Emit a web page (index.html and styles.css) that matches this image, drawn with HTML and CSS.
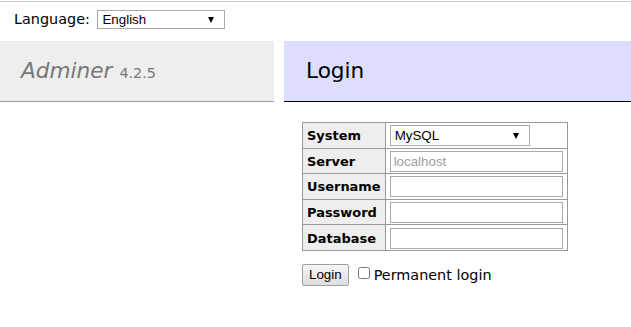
FILE: index.html
```html
<!DOCTYPE html>
<html>
<head>
  <title>Login - Adminer</title>
  <link rel="stylesheet" href="styles.css">
</head>
<body>
  <div class="lang">
    Language:
    <span class="select-wrap lang-wrap">
      <select class="lang-select">
        <option>English</option>
      </select>
    </span>
  </div>

  <div class="page">
    <div class="menu">
      <h1><a href="#" class="h1-link">Adminer</a> <span class="version">4.2.5</span></h1>
    </div>

    <div class="content">
      <h2>Login</h2>
      <form class="login-form">
        <table class="login-table">
          <tr>
            <th>System</th>
            <td>
              <span class="select-wrap driver-wrap">
                <select class="driver-select">
                  <option>MySQL</option>
                </select>
              </span>
            </td>
          </tr>
          <tr>
            <th>Server</th>
            <td><input type="text" class="field" placeholder="localhost"></td>
          </tr>
          <tr>
            <th>Username</th>
            <td><input type="text" class="field"></td>
          </tr>
          <tr>
            <th>Password</th>
            <td><input type="password" class="field"></td>
          </tr>
          <tr>
            <th>Database</th>
            <td><input type="text" class="field"></td>
          </tr>
        </table>
        <p class="actions">
          <button type="submit" class="login-btn">Login</button>
          <label class="permanent"><input type="checkbox" class="check"> Permanent login</label>
        </p>
      </form>
    </div>
  </div>
</body>
</html>
```

FILE: styles.css
```css
body {
  margin: 0;
  padding-top: 1px;
  color: #000;
  background: #fff;
  font: 14.4px/1.25 "DejaVu Sans", Verdana, sans-serif;
}

.lang {
  border-top: 1px solid #c8c8c8;
  height: 40px;
  padding: 8px 0 0 14px;
  box-sizing: border-box;
  line-height: 18px;
}

/* selects drawn flat with a small black arrow, like the old browser look */
.select-wrap {
  position: relative;
  display: inline-block;
  vertical-align: top;
}

.select-wrap::after {
  content: "";
  position: absolute;
  right: 11px;
  top: 50%;
  margin-top: -3px;
  border-left: 3.5px solid transparent;
  border-right: 3.5px solid transparent;
  border-top: 6px solid #000;
  pointer-events: none;
}

.lang-wrap {
  margin-left: 3px;
}

.lang-select,
.driver-select {
  appearance: none;
  -webkit-appearance: none;
  display: block;
  font: 13.33px "Liberation Sans", Arial, sans-serif;
  border: 1px solid #a9a9a9;
  background: #fff;
  color: #000;
  padding: 0 4px;
  border-radius: 0;
  margin: 0;
}

.lang-select {
  width: 128px;
  height: 19px;
}

.driver-select {
  width: 140px;
  height: 21px;
}

.page {
  display: flex;
  align-items: flex-start;
}

.menu {
  width: 274px;
  flex-shrink: 0;
}

h1 {
  margin: 0;
  height: 61px;
  padding: 0 0 0 21px;
  box-sizing: border-box;
  display: flex;
  align-items: center;
  font-size: 21.6px;
  font-weight: normal;
  color: #777;
  background: #eee;
  border-bottom: 1px solid #999;
}

.h1-link {
  color: #777;
  text-decoration: none;
  font-style: italic;
  margin-right: 7px;
}

.version {
  font-size: 14.4px;
  padding-top: 4px;
}

.content {
  flex: 1;
  margin-left: 10px;
}

h2 {
  margin: 0 0 20px 0;
  height: 61px;
  padding: 0 0 0 22px;
  box-sizing: border-box;
  display: flex;
  align-items: center;
  font-size: 21.6px;
  font-weight: normal;
  color: #000;
  background: #ddf;
  border-bottom: 1px solid #000;
}

.login-form {
  margin-left: 18px;
}

.login-table {
  border-collapse: separate;
  border-spacing: 0;
  border-top: 1px solid #999;
  border-left: 1px solid #999;
  font-size: 12.96px;
}

.login-table th,
.login-table td {
  border-right: 1px solid #999;
  border-bottom: 1px solid #999;
  padding: 2px 4px 1px;
  height: 25.6px;
  box-sizing: border-box;
}

.login-table th {
  background: #eee;
  text-align: left;
  width: 82px;
  padding-top: 3px;
  padding-bottom: 1px;
}

.login-table td {
  width: 182px;
}

.field {
  display: block;
  width: 173px;
  height: 21px;
  box-sizing: border-box;
  border: 1px solid #a9a9a9;
  font: 13.33px "Liberation Sans", Arial, sans-serif;
  padding: 1px 3px;
  margin: 0;
}

.field::placeholder {
  color: #a0a0a0;
}

.actions {
  margin: 13px 0 0;
  display: flex;
  align-items: center;
}

.login-btn {
  font: 13.33px "Liberation Sans", Arial, sans-serif;
  height: 22px;
  padding: 0 6px;
  border: 1px solid #a0a0a0;
  border-radius: 2px;
  background: linear-gradient(#f6f6f6, #dedede);
  color: #000;
}

.permanent {
  display: flex;
  align-items: center;
  margin-left: 6px;
  font-size: 14.4px;
}

.check {
  width: 12px;
  height: 12px;
  margin: 0 4px 0 3px;
  position: relative;
  top: -2px;
}
```
